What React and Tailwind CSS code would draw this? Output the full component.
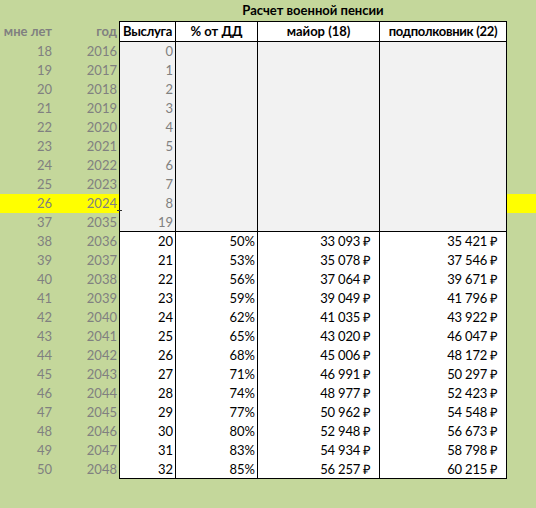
import React from "react";

const grey = [
  [18, 2016, 0], [19, 2017, 1], [20, 2018, 2], [21, 2019, 3], [22, 2020, 4],
  [23, 2021, 5], [24, 2022, 6], [25, 2023, 7], [26, 2024, 8], [37, 2035, 19],
];
const white = [
  [38, 2036, 20, "50%", "33 093", "35 421"],
  [39, 2037, 21, "53%", "35 078", "37 546"],
  [40, 2038, 22, "56%", "37 064", "39 671"],
  [41, 2039, 23, "59%", "39 049", "41 796"],
  [42, 2040, 24, "62%", "41 035", "43 922"],
  [43, 2041, 25, "65%", "43 020", "46 047"],
  [44, 2042, 26, "68%", "45 006", "48 172"],
  [45, 2043, 27, "71%", "46 991", "50 297"],
  [46, 2044, 28, "74%", "48 977", "52 423"],
  [47, 2045, 29, "77%", "50 962", "54 548"],
  [48, 2046, 30, "80%", "52 948", "56 673"],
  [49, 2047, 31, "83%", "54 934", "58 798"],
  [50, 2048, 32, "85%", "56 257", "60 215"],
];

const cols = "grid grid-cols-[56px_63px_56px_82px_122px_128px_29px]";

export default function App() {
  return (
    <div
      className="w-[536px] h-[508px] bg-[#c4d79b] overflow-hidden text-[13px] leading-none"
      style={{ fontFamily: "Lato, 'Liberation Sans', sans-serif" }}
    >
      {/* title */}
      <div className={cols + " h-[21px]"}>
        <div />
        <div />
        <div className="col-span-4 flex items-center justify-center font-bold text-[13px] text-black">
          Расчет военной пенсии
        </div>
        <div />
      </div>
      {/* header */}
      <div className={cols + " h-[21px]"}>
        <div className="flex items-center justify-end pr-[4px] font-bold text-[#808080]">мне лет</div>
        <div className="flex items-center justify-end pr-[2px] font-bold text-[#808080]">год</div>
        <div className="flex items-center justify-center font-bold text-black bg-white border-l border-t border-b border-black tracking-[-0.3px]">Выслуга</div>
        <div className="flex items-center justify-center font-bold text-black bg-white border-l border-t border-b border-black">% от ДД</div>
        <div className="flex items-center justify-center font-bold text-black bg-white border-l border-t border-b border-black">майор (18)</div>
        <div className="flex items-center justify-center font-bold text-black bg-white border-l border-t border-b border-r border-black tracking-[-0.3px]">подполковник (22)</div>
        <div />
      </div>
      {grey.map(([age, year, s], i) => {
        const hl = age === 26;
        const side = hl ? "bg-[#ffff00]" : "";
        return (
          <div key={age} className={cols + " h-[19px] text-[#808080]"}>
            <div className={"flex items-center justify-end pr-[4px] " + side}>{age}</div>
            <div className={"relative flex items-center justify-end pr-[2px] " + side}>
              {year}
              {hl && <span className="absolute right-[-3px] bottom-[2px] w-[5px] h-[1px] bg-[#333]" />}
            </div>
            <div className={"flex items-center justify-end pr-[2px] bg-[#f2f2f2] border-l border-black " + (i === grey.length - 1 ? "border-b" : "")}>{s}</div>
            <div className={"bg-[#f2f2f2] border-l border-black " + (i === grey.length - 1 ? "border-b" : "")} />
            <div className={"bg-[#f2f2f2] border-l border-black " + (i === grey.length - 1 ? "border-b" : "")} />
            <div className={"bg-[#f2f2f2] border-l border-r border-black " + (i === grey.length - 1 ? "border-b" : "")} />
            <div className={side} />
          </div>
        );
      })}
      {white.map(([age, year, s, p, a, b], i) => {
        const last = i === white.length - 1 ? " border-b" : "";
        return (
          <div key={age} className={cols + " h-[19px]"}>
            <div className="flex items-center justify-end pr-[4px] text-[#808080]">{age}</div>
            <div className="flex items-center justify-end pr-[2px] text-[#808080]">{year}</div>
            <div className={"flex items-center justify-end pr-[2px] bg-white text-black border-l border-black" + last}>{s}</div>
            <div className={"flex items-center justify-end pr-[2px] bg-white text-black border-l border-black" + last}>{p}</div>
            <div className={"flex items-center justify-end pr-[8px] bg-white text-black border-l border-black tracking-[-0.2px]" + last}>{a}&nbsp;₽</div>
            <div className={"flex items-center justify-end pr-[8px] bg-white text-black border-l border-r border-black tracking-[-0.2px]" + last}>{b}&nbsp;₽</div>
            <div />
          </div>
        );
      })}
    </div>
  );
}
